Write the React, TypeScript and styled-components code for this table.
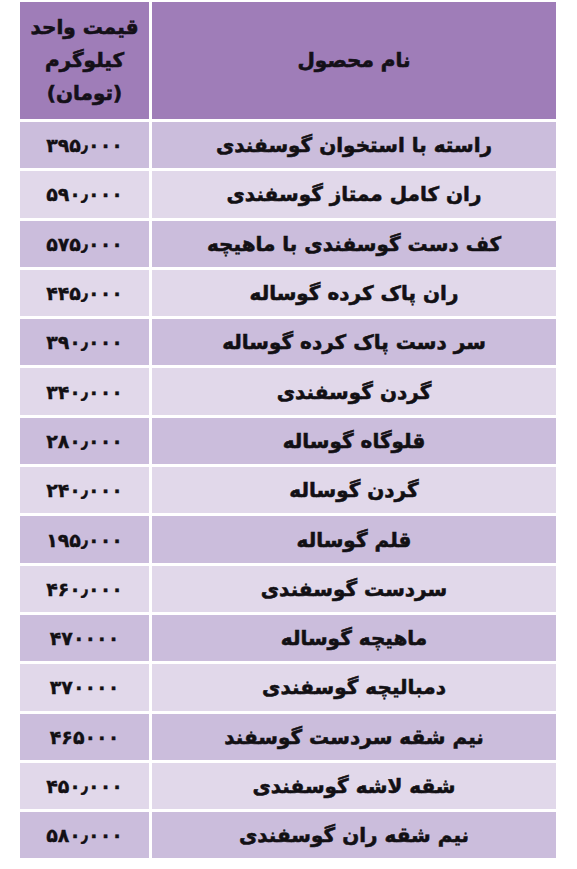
import React from "react";
import styled, { createGlobalStyle } from "styled-components";

const GlobalStyle = createGlobalStyle`
  html, body {
    margin: 0;
    padding: 0;
    background: #ffffff;
  }
  body {
    font-family: "DejaVu Sans", "Noto Sans", sans-serif;
  }
`;

const Page = styled.div`
  padding: 2px 21px 0 20px;
  width: 577px;
  box-sizing: border-box;
`;

const Table = styled.div`
  direction: rtl;
  display: grid;
  grid-template-columns: 1fr 129px;
  grid-auto-rows: 46.3px;
  grid-template-rows: 117px;
  gap: 3px;
`;

const HeadCell = styled.div`
  background: #9f7db8;
  display: flex;
  align-items: center;
  justify-content: center;
  text-align: center;
  color: #141018;
  font-weight: bold;
  font-size: 20px;
  line-height: 33px;
  -webkit-text-stroke: 0.6px #141018;
`;

const Cell = styled.div<{ $dark: boolean; $num?: boolean }>`
  background: ${(p) => (p.$dark ? "#cbbddc" : "#e1d8ea")};
  display: flex;
  align-items: center;
  justify-content: center;
  color: #121014;
  font-weight: bold;
  font-size: ${(p) => (p.$num ? "19px" : "20px")};
  white-space: nowrap;
  -webkit-text-stroke: ${(p) => (p.$num ? "0.35px" : "0.55px")} #121014;
`;

const rows: [string, string][] = [
  ["راسته با استخوان گوسفندی", "۳۹۵٫۰۰۰"],
  ["ران کامل ممتاز گوسفندی", "۵۹۰٫۰۰۰"],
  ["کف دست گوسفندی با ماهیچه", "۵۷۵٫۰۰۰"],
  ["ران پاک کرده گوساله", "۴۴۵٫۰۰۰"],
  ["سر دست پاک کرده گوساله", "۳۹۰٫۰۰۰"],
  ["گردن گوسفندی", "۳۴۰٫۰۰۰"],
  ["قلوگاه گوساله", "۲۸۰٫۰۰۰"],
  ["گردن گوساله", "۲۴۰٫۰۰۰"],
  ["قلم گوساله", "۱۹۵٫۰۰۰"],
  ["سردست گوسفندی", "۴۶۰٫۰۰۰"],
  ["ماهیچه گوساله", "۴۷۰۰۰۰"],
  ["دمبالیچه گوسفندی", "۳۷۰۰۰۰"],
  ["نیم شقه سردست گوسفند", "۴۶۵۰۰۰"],
  ["شقه لاشه گوسفندی", "۴۵۰٫۰۰۰"],
  ["نیم شقه ران گوسفندی", "۵۸۰٫۰۰۰"],
];

export default function App() {
  return (
    <>
      <GlobalStyle />
      <Page>
        <Table>
          <HeadCell>نام محصول</HeadCell>
          <HeadCell>
            قیمت واحد
            <br />
            کیلوگرم
            <br />
            (تومان)
          </HeadCell>
          {rows.map(([name, price], i) => (
            <React.Fragment key={i}>
              <Cell $dark={i % 2 === 0}>{name}</Cell>
              <Cell $dark={i % 2 === 0} $num>
                {price}
              </Cell>
            </React.Fragment>
          ))}
        </Table>
      </Page>
    </>
  );
}
